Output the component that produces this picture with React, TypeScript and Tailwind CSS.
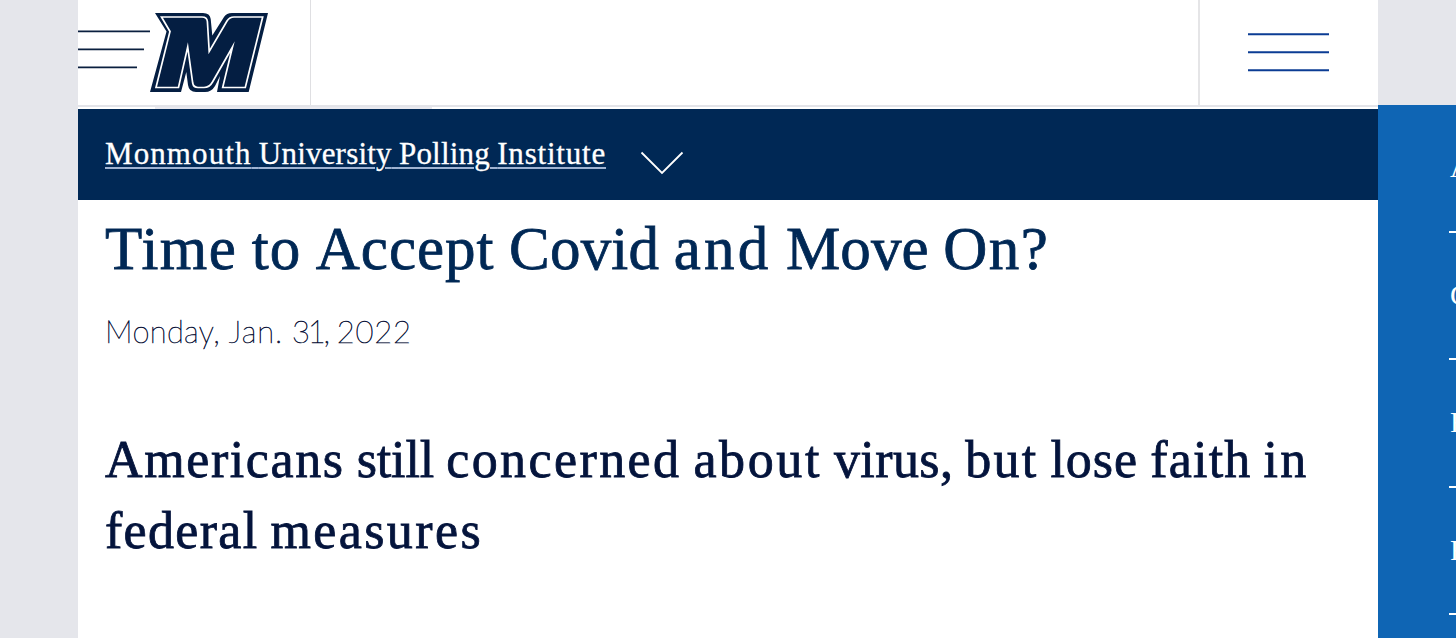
const menu = ['A', 'C', 'F', 'R'];

function Logo() {
  return (
    <svg width="192" height="105" viewBox="78 0 192 105" className="block shrink-0">
      <g stroke="#0a1f3f" strokeWidth="1.8">
        <path d="M78 31.3H150M78 49.3H144M78 67.3H137" />
      </g>
      <path
        d="M155 13H203Q210 13 210.700 19L212.300 35.500L224 17Q226.500 13 232 13H268L248.700 92H217L220 76L215 86Q211.500 92 205 92H196Q189 92 188 85L186.300 72L181 92H150L166.500 31.500Z"
        fill="#041e42"
      />
      <path
        d="M161.500 17H202Q207 17 207.400 21.500L209.200 51.500L227 21Q229.500 17 234 17H262.700L245.300 87.500H222.700L232.500 47L212.500 82Q209.500 87.500 204 87.500H198Q193.500 87.500 192.700 83L187.700 47L178.500 87.500H156L170 31.500Z"
        fill="none"
        stroke="#fff"
        strokeWidth="1.7"
        strokeMiterlimit="10"
      />
    </svg>
  );
}

function MenuIcon() {
  return (
    <svg width="82" height="40" viewBox="0 0 82 40" className="block">
      <path d="M0 2.300H81M0 20.300H81M0 38.300H81" stroke="#0b3c94" strokeWidth="1.900" />
    </svg>
  );
}

export default function App() {
  return (
    <div className="flex h-[638px] w-[1456px] overflow-hidden bg-[#e5e6eb] font-['Liberation_Serif','Times_New_Roman',serif]">
      <main className="ml-[78px] h-full w-[1300px] shrink-0 bg-white">
        <header className="flex h-[107px] border-b-2 border-[#e3e4e9]">
          <div className="w-[233px] border-r-[1.500px] border-[#dfdfe2]">
            <Logo />
          </div>
          <div className="flex-1" />
          <div className="w-[180px] border-l-2 border-[#e5e5e7] pt-8 pl-12">
            <MenuIcon />
          </div>
        </header>
        <div className="h-[2px] pl-[77px]">
          <div className="h-full w-[277px] bg-[#e9e9ef]" />
        </div>
        <nav className="flex h-[91px] items-start bg-[#002855] pl-[27px]">
          <a className="mt-[27px] block w-[501px] text-[31px] leading-[36px] [word-spacing:-0.5px] whitespace-nowrap text-white underline decoration-[#9fb3d2] decoration-[1.5px] underline-offset-[3px] [-webkit-text-stroke:0.3px_#fff]">
            <span className="tracking-[1.1px]">Monmouth</span> <span className="tracking-[0.2px]">University</span>{' '}
            <span className="tracking-[0.2px]">Polling</span> <span className="tracking-[0.8px]">Institute</span>
          </a>
          <svg width="44" height="24" viewBox="0 0 44 24" className="mt-[42px] ml-[34px] shrink-0">
            <path d="M1.500 1.500L22 22L42.500 1.500" fill="none" stroke="#fff" strokeWidth="1.800" />
          </svg>
        </nav>
        <article className="pl-[27px] whitespace-nowrap">
          <h1 className="mt-[14px] h-[70px] text-[61px] leading-[70px] [word-spacing:-0.7px] text-[#002855] [-webkit-text-stroke:0.8px_#002855]">
            <span className="tracking-[1.4px]">Time</span> <span className="tracking-[1px]">to</span>{' '}
            <span className="tracking-[1px]">Accept</span> <span className="tracking-[0.2px]">Covid</span>{' '}
            <span className="tracking-[3.2px]">and</span> <span className="tracking-[0.1px]">Move</span>{' '}
            <span className="tracking-[1.4px]">On?</span>
          </h1>
          <p className="mt-[27px] h-[40px] font-['Lato',sans-serif] text-[31px] leading-[40px] font-thin text-[#0a1238] [-webkit-text-stroke:0.6px_#0a1238]">
            <span className="tracking-[0.3px]">Monday,</span> <span className="tracking-[0.9px]">Jan.</span>{' '}
            <span className="tracking-[-2.2px]">31,</span> <span className="tracking-[0.8px]">2022</span>
          </p>
          <h2 className="mt-[73px] text-[52px] leading-[71px] [word-spacing:-1px] text-[#04143c] [-webkit-text-stroke:0.8px_#04143c]">
            <span className="tracking-[1.6px]">Americans</span> <span className="tracking-[-0.1px]">still</span>{' '}
            <span className="tracking-[2.4px]">concerned</span> <span className="tracking-[2.6px]">about</span>{' '}
            <span className="tracking-[0.4px]">virus,</span> <span className="tracking-[2.2px]">but</span>{' '}
            <span className="tracking-[1px]">lose</span> <span className="tracking-[1.2px]">faith</span>{' '}
            <span className="tracking-[2.2px]">in</span>
            <br />
            <span className="tracking-[1.3px]">federal</span> <span className="tracking-[2.4px]">measures</span>
          </h2>
        </article>
      </main>
      <aside className="mt-[105px] h-[533px] w-[78px] shrink-0 overflow-hidden bg-[#0f65b4] pl-[71px]">
        {menu.map((m) => (
          <div key={m} className="h-[127.500px] w-[80px] border-b-2 border-white pl-px text-[29px] leading-[125px] text-white">
            {m}
          </div>
        ))}
      </aside>
    </div>
  );
}
